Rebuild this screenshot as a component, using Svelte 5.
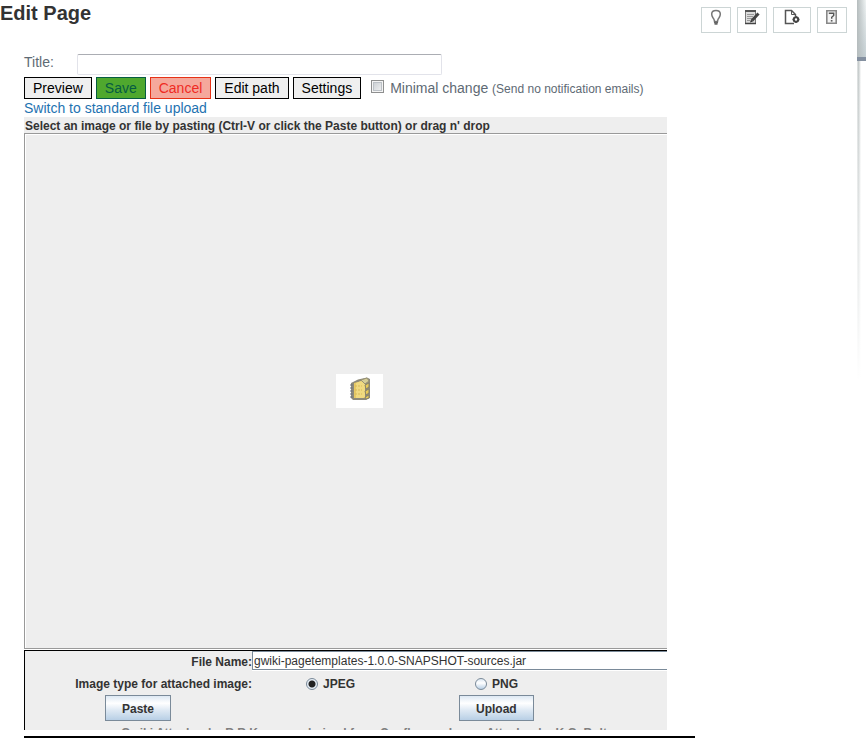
<script>
  let title = $state('');
  let fileName = $state('gwiki-pagetemplates-1.0.0-SNAPSHOT-sources.jar');
  let imageType = $state('jpeg');
  let minimal = $state(false);
</script>

<div class="page">
  <main>
    <header>
      <h1>Edit Page</h1>
      <nav aria-label="Page tools">
        <button class="tool" aria-label="Hint">
          <svg width="16" height="18" viewBox="0 0 16 18" fill="none" stroke="#777" stroke-width="1.5">
            <path d="M6.5 12.5 Q6.5 10.5 4.8 8.5 Q3.7 6.8 3.7 5 Q3.7 1.5 8 1.5 Q12.3 1.5 12.3 5 Q12.3 6.8 11.2 8.5 Q9.5 10.5 9.5 12.5Z" />
            <path d="M6 13.5H10M6.5 15H9.5" stroke="#666" />
          </svg>
        </button>
        <button class="tool" aria-label="Edit">
          <svg width="16" height="18" viewBox="0 0 16 18" fill="none">
            <path d="M1.5 2.5H11.5V14.5H1.5Z" fill="#ddd" stroke="#777" />
            <path d="M1 2H12" stroke="#555" stroke-width="2" />
            <path d="M3 5.5H10M3 7.5H9M3 9.5H8M3 11.5H6" stroke="#999" />
            <path d="M8 11.5L14.5 4.5" stroke="#444" stroke-width="3" />
            <path d="M6 13.5L7 10.5L9 12.5Z" fill="#333" />
            <path d="M1 14.5H12" stroke="#444" stroke-width="1.5" />
          </svg>
        </button>
        <button class="tool wide" aria-label="Page settings">
          <svg width="16" height="18" viewBox="0 0 16 18" fill="none" stroke="#555" stroke-width="1.5">
            <path d="M10 14.5H1.5V1.5H7.5L11.5 5.5V7" />
            <path d="M7.5 1.5V5.5H11.5" stroke-width="1" />
            <circle cx="12" cy="10.5" r="2.2" fill="#fff" stroke="#444" stroke-width="2" />
            <path d="M12 7V8M12 13V14M8.5 10.5H9.5M14.5 10.5H15.5" stroke="#444" />
          </svg>
        </button>
        <button class="tool" aria-label="Help">
          <svg width="16" height="18" viewBox="0 0 16 18" fill="none">
            <path d="M2.8 1.8H12.2V14.2H2.8Z" fill="#f4f4f4" stroke="#888" stroke-width="1.6" />
            <path d="M5.5 5V4.2H9.7V6.5L7.7 8.2V9.8" stroke="#555" stroke-width="1.4" />
            <path d="M6.8 11.8H8.5" stroke="#555" stroke-width="1.5" />
          </svg>
        </button>
      </nav>
    </header>

    <form onsubmit={(e) => e.preventDefault()}>
      <div class="title-row">
        <label for="title">Title:</label>
        <input id="title" type="text" bind:value={title} />
      </div>

      <div class="actions">
        <button type="button">Preview</button>
        <button type="submit" class="save">Save</button>
        <button type="button" class="cancel">Cancel</button>
        <button type="button">Edit path</button>
        <button type="button">Settings</button>
        <label class="minimal">
          <input type="checkbox" bind:checked={minimal} />
          <span>Minimal change <small>(Send no notification emails)</small></span>
        </label>
      </div>

      <a class="switch" href="#standard">Switch to standard file upload</a>

      <section class="applet">
        <h2>Select an image or file by pasting (Ctrl-V or click the Paste button) or drag n' drop</h2>
        <div class="drop">
          <div class="thumb">
            <svg width="24" height="26" viewBox="0 0 24 26">
              <path d="M2 7L9 3.5L18 1.5L21 3V22L17 24H4L2 22Z" fill="#8d8a7a" />
              <path d="M5 7L11 5.5H16V22H5Z" fill="#e6c964" />
              <path d="M7 7L12 5L16 7V21L14 22H7Z" fill="#f0da80" />
              <path d="M12 4L18 2L20 5L16 8Z" fill="#d5cd96" stroke="#999374" />
              <path d="M16 9L20 7V11L17 13ZM16 15L20 13V17L17 19ZM16 21L20 19V22L17 23Z" fill="#e8ca56" stroke="#88826a" />
              <path d="M2.5 8V22" stroke="#777b80" stroke-width="2" stroke-dasharray="2 1" />
              <path d="M6 10H13M6 14H13M6 18H13" stroke="#d8b95a" stroke-dasharray="2 1" />
            </svg>
          </div>
        </div>
        <div class="details">
          <div class="row file">
            <label for="file">File Name:</label>
            <input id="file" type="text" bind:value={fileName} />
          </div>
          <div class="row types" role="radiogroup" aria-labelledby="type-label">
            <span class="label" id="type-label">Image type for attached image:</span>
            <div class="options">
              <label><input type="radio" value="jpeg" bind:group={imageType} />JPEG</label>
              <label><input type="radio" value="png" bind:group={imageType} />PNG</label>
            </div>
          </div>
          <div class="commands">
            <div class="left"><button type="button">Paste</button></div>
            <div class="right"><button type="button">Upload</button></div>
          </div>
          <p>Gwiki Attacher by R.R.Kommer, derived from Confluence Image Attacher by K.G. Bolten</p>
        </div>
      </section>
    </form>
  </main>
  <aside aria-hidden="true"><div class="banner"></div><div class="shade"></div></aside>
</div>

<style>
  :global(body) { background: #fff; }
  .page {
    display: flex;
    font-family: "Liberation Sans", Arial, sans-serif;
    color: #333;
  }
  .page * { box-sizing: border-box; }
  button, input { font-family: inherit; margin: 0; }
  main { flex: 1; min-width: 0; }
  header { display: flex; justify-content: space-between; height: 54px; }
  h1 { margin: 0; font-size: 20px; line-height: 26px; }
  nav { display: flex; gap: 6px; padding: 7px 10px 0 0; }
  .tool {
    width: 30px;
    height: 26px;
    padding: 1px 0 0;
    border: 1px solid #ccd5d5;
    background: #fff;
    display: flex;
    justify-content: center;
  }
  .tool svg { flex: none; }
  .tool.wide { width: 38px; }
  form { padding-left: 24px; }
  .title-row { display: flex; height: 23px; color: #5e6a74; font-size: 14px; line-height: 16px; }
  .title-row label { width: 53px; }
  .title-row input {
    width: 365px;
    height: 21px;
    border: 1px solid #e2e3ea;
    border-top-color: #abadb3;
    border-radius: 2px;
    padding: 0 2px;
    font-size: 14px;
  }
  .actions { display: flex; gap: 4px; }
  .actions button {
    height: 22px;
    padding: 0 8px;
    border: 1px solid #000;
    background: #efefef;
    color: #000;
    font-size: 14px;
    line-height: 20px;
  }
  .actions .save { background: #4fa82e; border-color: #065c42; color: #065c42; }
  .actions .cancel { background: #f5a89c; border-color: #e63217; color: #ef2b24; }
  .minimal {
    display: flex;
    gap: 6px;
    padding: 3px 0 0 6px;
    font-size: 14px;
    line-height: 16px;
    color: #5e6a74;
  }
  .minimal input {
    appearance: none;
    width: 13px;
    height: 13px;
    border: 1px solid #8e8f8f;
    background: linear-gradient(135deg, #c4c9ce, #f6f6f6);
    box-shadow: inset 0 0 0 1px #f4f4f4, inset 0 0 0 2px #bcc1c6;
  }
  .minimal small { font-size: 12px; }
  .switch { display: block; font-size: 14px; line-height: 18px; color: #1f73b1; text-decoration: none; }
  .applet {
    width: 671px;
    max-width: 100%;
    border-bottom: 2px solid #000;
    padding: 0 28px 6px 0;
    font-size: 12px;
  }
  h2 { margin: 0; padding: 2px 0 0 1px; font-size: 12px; line-height: 14px; background: #eee; }
  .drop {
    display: flex;
    align-items: center;
    justify-content: center;
    height: 516px;
    padding-left: 26px;
    border: 1px solid #999;
    border-right: 0;
    background: #eee;
    box-shadow: inset 1px 1px #fff;
  }
  .thumb { width: 47px; height: 34px; padding: 2px 0 0 13px; background: #fff; }
  .details {
    height: 80px;
    margin-top: 1px;
    border: solid #000;
    border-width: 1px 0 0 1px;
    background: #eee;
    overflow: hidden;
    font-weight: bold;
  }
  .row { display: flex; line-height: 22px; }
  .row > label, .row > .label { flex: 0 0 227px; text-align: right; }
  .file { height: 20px; }
  .file input {
    flex: 1;
    min-width: 0;
    height: 19px;
    border: 1px solid #7a8a99;
    border-right: 0;
    padding: 1px 1px 0;
    background: #fff;
    color: #333;
    font-size: 12px;
    box-shadow: 0 1px #fff;
  }
  .types { padding: 2px 0 0; }
  .options { display: flex; flex: 1; padding-left: 54px; }
  .options label { display: flex; align-items: center; gap: 5px; width: 169px; }
  .options input {
    appearance: none;
    width: 12px;
    height: 12px;
    border: 1px solid #7a8a99;
    border-radius: 50%;
    background: linear-gradient(#dde8f3, #fff 40%, #b8cfe5);
  }
  .options input:checked { background: radial-gradient(circle, #222 3px, #e6eef6 4px); }
  .commands { display: flex; }
  .left { width: 354px; padding-left: 80px; }
  .right { padding-left: 80px; }
  .commands button {
    height: 26px;
    padding: 1px 16px 0;
    border: 1px solid #7a8a99;
    background: linear-gradient(#dde8f3, #fff 30%, #dde8f3 60%, #b8cfe5);
    color: #333;
    font-size: 12px;
    font-weight: bold;
  }
  p { margin: 4px 0 0 96px; line-height: 16px; color: #808080; white-space: nowrap; }
  aside { flex: 0 0 9px; }
  .banner {
    height: 61px;
    border-bottom: 4px solid #8490a0;
    background: linear-gradient(90deg, #b5bcbd, transparent), linear-gradient(#f0f4f4, #c5d0d4);
  }
  .shade {
    width: 4px;
    height: 320px;
    background: linear-gradient(transparent, #fff), linear-gradient(90deg, #e4e6e6, #c5cbcb 40%, #fff);
  }
</style>
